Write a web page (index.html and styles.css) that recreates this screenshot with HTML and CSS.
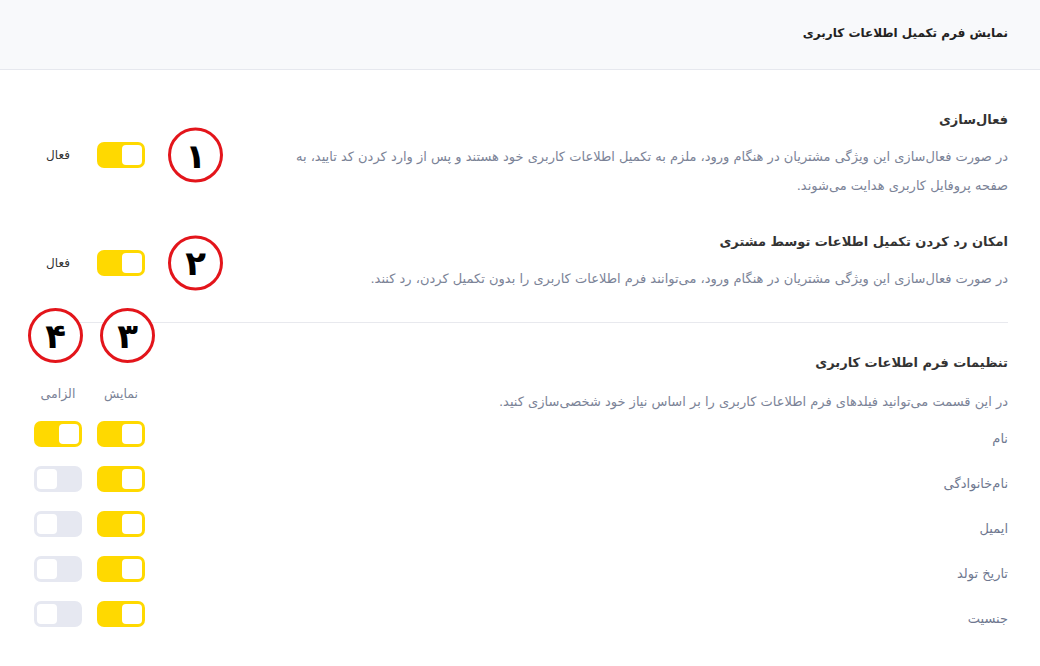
FILE: index.html
```html
<!DOCTYPE html>
<html lang="fa" dir="rtl">
<head>
    <meta charset="UTF-8">
    <meta name="viewport" content="width=device-width, initial-scale=1.0">
    <title>نمایش فرم تکمیل اطلاعات کاربری</title>
    <link rel="stylesheet" href="styles.css">
</head>
<body>
    <!-- Page header -->
    <div class="page-header">
        <h1>نمایش فرم تکمیل اطلاعات کاربری</h1>
    </div>

    <div class="content">
        <!-- Activation -->
        <div class="setting">
            <div class="setting-text">
                <h2>فعال‌سازی</h2>
                <p>در صورت فعال‌سازی این ویژگی مشتریان در هنگام ورود، ملزم به تکمیل اطلاعات کاربری خود هستند و پس از وارد کردن کد تایید، به صفحه پروفایل کاربری هدایت می‌شوند.</p>
            </div>
            <div class="controls">
                <span class="mark mark-side">۱</span>
                <span class="switch on"></span>
                <span class="switch-label">فعال</span>
            </div>
        </div>

        <!-- Skip option -->
        <div class="setting setting-last">
            <div class="setting-text">
                <h2>امکان رد کردن تکمیل اطلاعات توسط مشتری</h2>
                <p>در صورت فعال‌سازی این ویژگی مشتریان در هنگام ورود، می‌توانند فرم اطلاعات کاربری را بدون تکمیل کردن، رد کنند.</p>
            </div>
            <div class="controls">
                <span class="mark mark-side">۲</span>
                <span class="switch on"></span>
                <span class="switch-label">فعال</span>
            </div>
        </div>

        <hr class="divider">

        <!-- Form fields -->
        <div class="setting fields-head">
            <div class="setting-text">
                <h2>تنظیمات فرم اطلاعات کاربری</h2>
                <p>در این قسمت می‌توانید فیلدهای فرم اطلاعات کاربری را بر اساس نیاز خود شخصی‌سازی کنید.</p>
            </div>
            <div class="controls">
                <span class="col-head">نمایش<span class="mark mark-top">۳</span></span>
                <span class="col-head">الزامی<span class="mark mark-top mark-4">۴</span></span>
            </div>
        </div>

        <div class="field-row">
            <span class="field-name">نام</span>
            <div class="controls"><span class="switch on"></span><span class="switch on"></span></div>
        </div>
        <div class="field-row">
            <span class="field-name">نام‌خانوادگی</span>
            <div class="controls"><span class="switch on"></span><span class="switch"></span></div>
        </div>
        <div class="field-row">
            <span class="field-name">ایمیل</span>
            <div class="controls"><span class="switch on"></span><span class="switch"></span></div>
        </div>
        <div class="field-row">
            <span class="field-name">تاریخ تولد</span>
            <div class="controls"><span class="switch on"></span><span class="switch"></span></div>
        </div>
        <div class="field-row">
            <span class="field-name">جنسیت</span>
            <div class="controls"><span class="switch on"></span><span class="switch"></span></div>
        </div>
    </div>
</body>
</html>
```

FILE: styles.css
```css
/* Base */
body {
    margin: 0;
    background: #ffffff;
    font-family: "DejaVu Sans", sans-serif;
    color: #333333;
}

/* Header bar */
.page-header {
    height: 70px;
    background-color: #f8f9fb;
    border-bottom: 1px solid #e6e8ee;
    box-sizing: border-box;
    display: flex;
    align-items: center;
    padding: 0 32px 4px 32px;
}

.page-header h1 {
    margin: 0;
    font-size: 12px;
    font-weight: bold;
    color: #222222;
}

.content {
    padding: 40px 32px 20px 34px;
}

/* Setting rows */
.setting {
    display: flex;
    align-items: center;
    justify-content: space-between;
    margin-bottom: 32px;
}

.setting-last {
    margin-bottom: 29px;
}

.setting-text {
    flex: 1;
    max-width: 730px;
}

.setting-text h2 {
    margin: 0 0 12px 0;
    font-size: 13px;
    line-height: 20px;
    font-weight: bold;
    color: #333333;
}

.setting-text p {
    margin: 0;
    font-size: 13px;
    line-height: 29px;
    color: #7b8397;
}

/* Controls on the left */
.controls {
    display: flex;
    align-items: center;
    gap: 15px;
    position: relative;
}

.switch-label {
    width: 48px;
    text-align: center;
    font-size: 12px;
    color: #333333;
}

.switch {
    width: 48px;
    height: 26px;
    border-radius: 7px;
    background-color: #e6e8f1;
    position: relative;
    display: block;
}

.switch::after {
    content: "";
    position: absolute;
    top: 3px;
    left: 3px;
    width: 20px;
    height: 20px;
    border-radius: 4px;
    background: #ffffff;
}

.switch.on {
    background-color: #ffd900;
}

.switch.on::after {
    left: auto;
    right: 3px;
}

.divider {
    border: none;
    border-top: 1px solid #e8e9ee;
    margin: 0 0 30px 0;
}

/* Field list */
.fields-head {
    align-items: flex-end;
    margin-bottom: 0;
}

.fields-head .controls {
    align-items: flex-end;
}

.fields-head .setting-text h2 {
    margin-bottom: 14px;
}

.col-head {
    width: 48px;
    text-align: center;
    font-size: 12.5px;
    line-height: 20px;
    color: #7b8397;
    margin-bottom: 12px;
    position: relative;
}

.field-row {
    display: flex;
    justify-content: space-between;
    align-items: flex-start;
    height: 45px;
}

.field-row .controls {
    align-items: flex-start;
}

.field-name {
    font-size: 13px;
    line-height: 46px;
    color: #6f7890;
}

.field-row .switch {
    margin-top: 5px;
}

/* Red numbered annotation marks */
.mark {
    position: absolute;
    width: 49px;
    height: 49px;
    border: 3.5px solid #e3151b;
    border-radius: 50%;
    background: #ffffff;
    display: flex;
    align-items: center;
    justify-content: center;
    font-size: 34px;
    font-weight: bold;
    color: #000000;
    line-height: 1;
}

.mark-side {
    right: -78px;
    top: 50%;
    transform: translateY(-50%);
}

.mark-top {
    top: -76px;
    left: 3px;
}

.mark-top.mark-4 {
    left: -6px;
}
```
